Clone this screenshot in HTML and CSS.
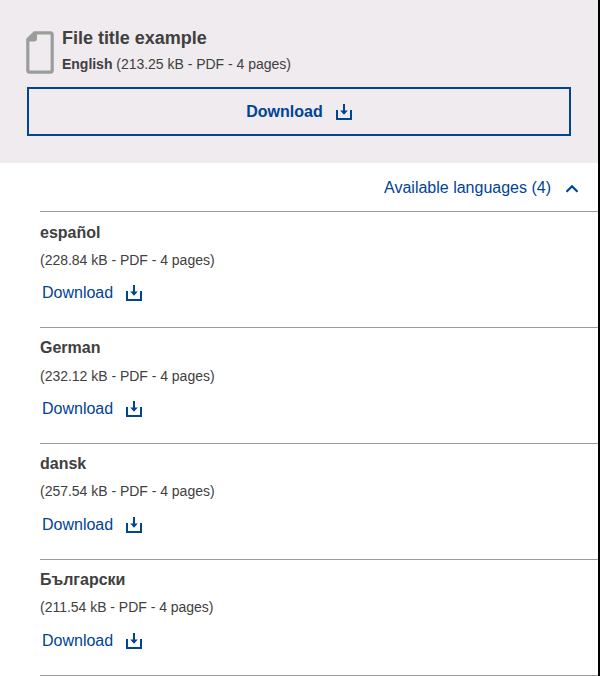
FILE: index.html
```html
<!DOCTYPE html>
<html lang="en">
<head>
<meta charset="utf-8">
<title>File title example</title>
<link rel="stylesheet" href="styles.css">
</head>
<body>
<svg width="0" height="0" class="defs" aria-hidden="true">
  <symbol id="download" viewBox="0 0 16 16">
    <path d="M1 6v9h14V6" fill="none" stroke="currentColor" stroke-width="2"/>
    <path d="M7 0h2v6.500h2.800L8 10.800 4.200 6.500H7z" fill="currentColor"/>
  </symbol>
</svg>
<main class="file">
  <header class="file-header">
    <div class="file-info">
      <svg class="file-icon" viewBox="0 0 28 44">
        <path d="M8.500 1.800H24.200a2 2 0 0 1 2 2V39.200a2 2 0 0 1-2 2H3.800a2 2 0 0 1-2-2V8.500z" fill="none" stroke="#9b9d9b" stroke-width="3.200"/>
        <path d="M8 1h3v6.500a3 3 0 0 1-3 3H1V8z" fill="#9b9d9b"/>
      </svg>
      <div>
        <h1 class="file-title">File title example</h1>
        <p class="file-meta"><strong>English</strong> (213.25 kB - PDF - 4 pages)</p>
      </div>
    </div>
    <a class="button">Download <svg class="icon"><use href="#download"/></svg></a>
  </header>
  <div class="toggle">Available languages (4)
    <svg class="chevron" viewBox="0 0 14 9"><path d="M1.500 7.700 7 2.200l5.500 5.500" fill="none" stroke="currentColor" stroke-width="2.200"/></svg>
  </div>
  <ul class="languages">
    <li class="language"><h2 class="name">español</h2><p class="meta">(228.84 kB - PDF - 4 pages)</p><a class="link">Download <svg class="icon"><use href="#download"/></svg></a></li>
    <li class="language"><h2 class="name">German</h2><p class="meta">(232.12 kB - PDF - 4 pages)</p><a class="link">Download <svg class="icon"><use href="#download"/></svg></a></li>
    <li class="language"><h2 class="name">dansk</h2><p class="meta">(257.54 kB - PDF - 4 pages)</p><a class="link">Download <svg class="icon"><use href="#download"/></svg></a></li>
    <li class="language"><h2 class="name">Български</h2><p class="meta">(211.54 kB - PDF - 4 pages)</p><a class="link">Download <svg class="icon"><use href="#download"/></svg></a></li>
  </ul>
</main>
</body>
</html>
```
FILE: styles.css
```css
* { box-sizing: border-box; }
body {
  margin: 0;
  background: #fff;
  color: #404040;
  font: 16px/24px "Liberation Sans", Arial, sans-serif;
}
h1, h2, p, ul { margin: 0; padding: 0; }
.defs { display: none; }
.file {
  height: 676px;
  border-right: 2px solid #000;
  overflow: hidden;
}
.file-header {
  height: 163px;
  padding: 26px 27px 27px;
  background: #efebee;
}
.file-info {
  display: flex;
  gap: 8px;
  height: 61px;
  margin-left: -1px;
}
.file-icon {
  width: 28px;
  height: 44px;
  margin-top: 5px;
}
.file-title { font-size: 18px; line-height: 24px; letter-spacing: -0.02px; }
.file-meta { margin-top: 2px; font-size: 14px; letter-spacing: -0.02px; }
.button {
  display: flex;
  align-items: center;
  justify-content: center;
  gap: 13px;
  height: 49px;
  border: 2px solid #004494;
  color: #004494;
  font-weight: bold;
}
.icon {
  flex: none;
  width: 16px;
  height: 16px;
}
.button .icon { margin-top: 1px; }
.toggle {
  display: flex;
  align-items: center;
  justify-content: flex-end;
  gap: 14px;
  height: 48px;
  padding: 2px 19px 0 0;
  color: #004494;
}
.chevron { width: 14px; height: 9px; }
.languages {
  margin-left: 40px;
  border-bottom: 1px solid #9a9a9a;
  list-style: none;
}
.language {
  display: grid;
  grid-template-rows: 28px 32px 24px;
  height: 116px;
  padding-top: 8px;
  border-top: 1px solid #9a9a9a;
}
.name { font-size: 16px; }
.language:first-child .name { padding-top: 1px; }
.meta { font-size: 14px; letter-spacing: -0.02px; }
.language:nth-child(n + 3) .meta { line-height: 22px; }
.link {
  display: flex;
  align-items: center;
  gap: 13px;
  height: 26px;
  padding-left: 2px;
  color: #004494;
}
```
